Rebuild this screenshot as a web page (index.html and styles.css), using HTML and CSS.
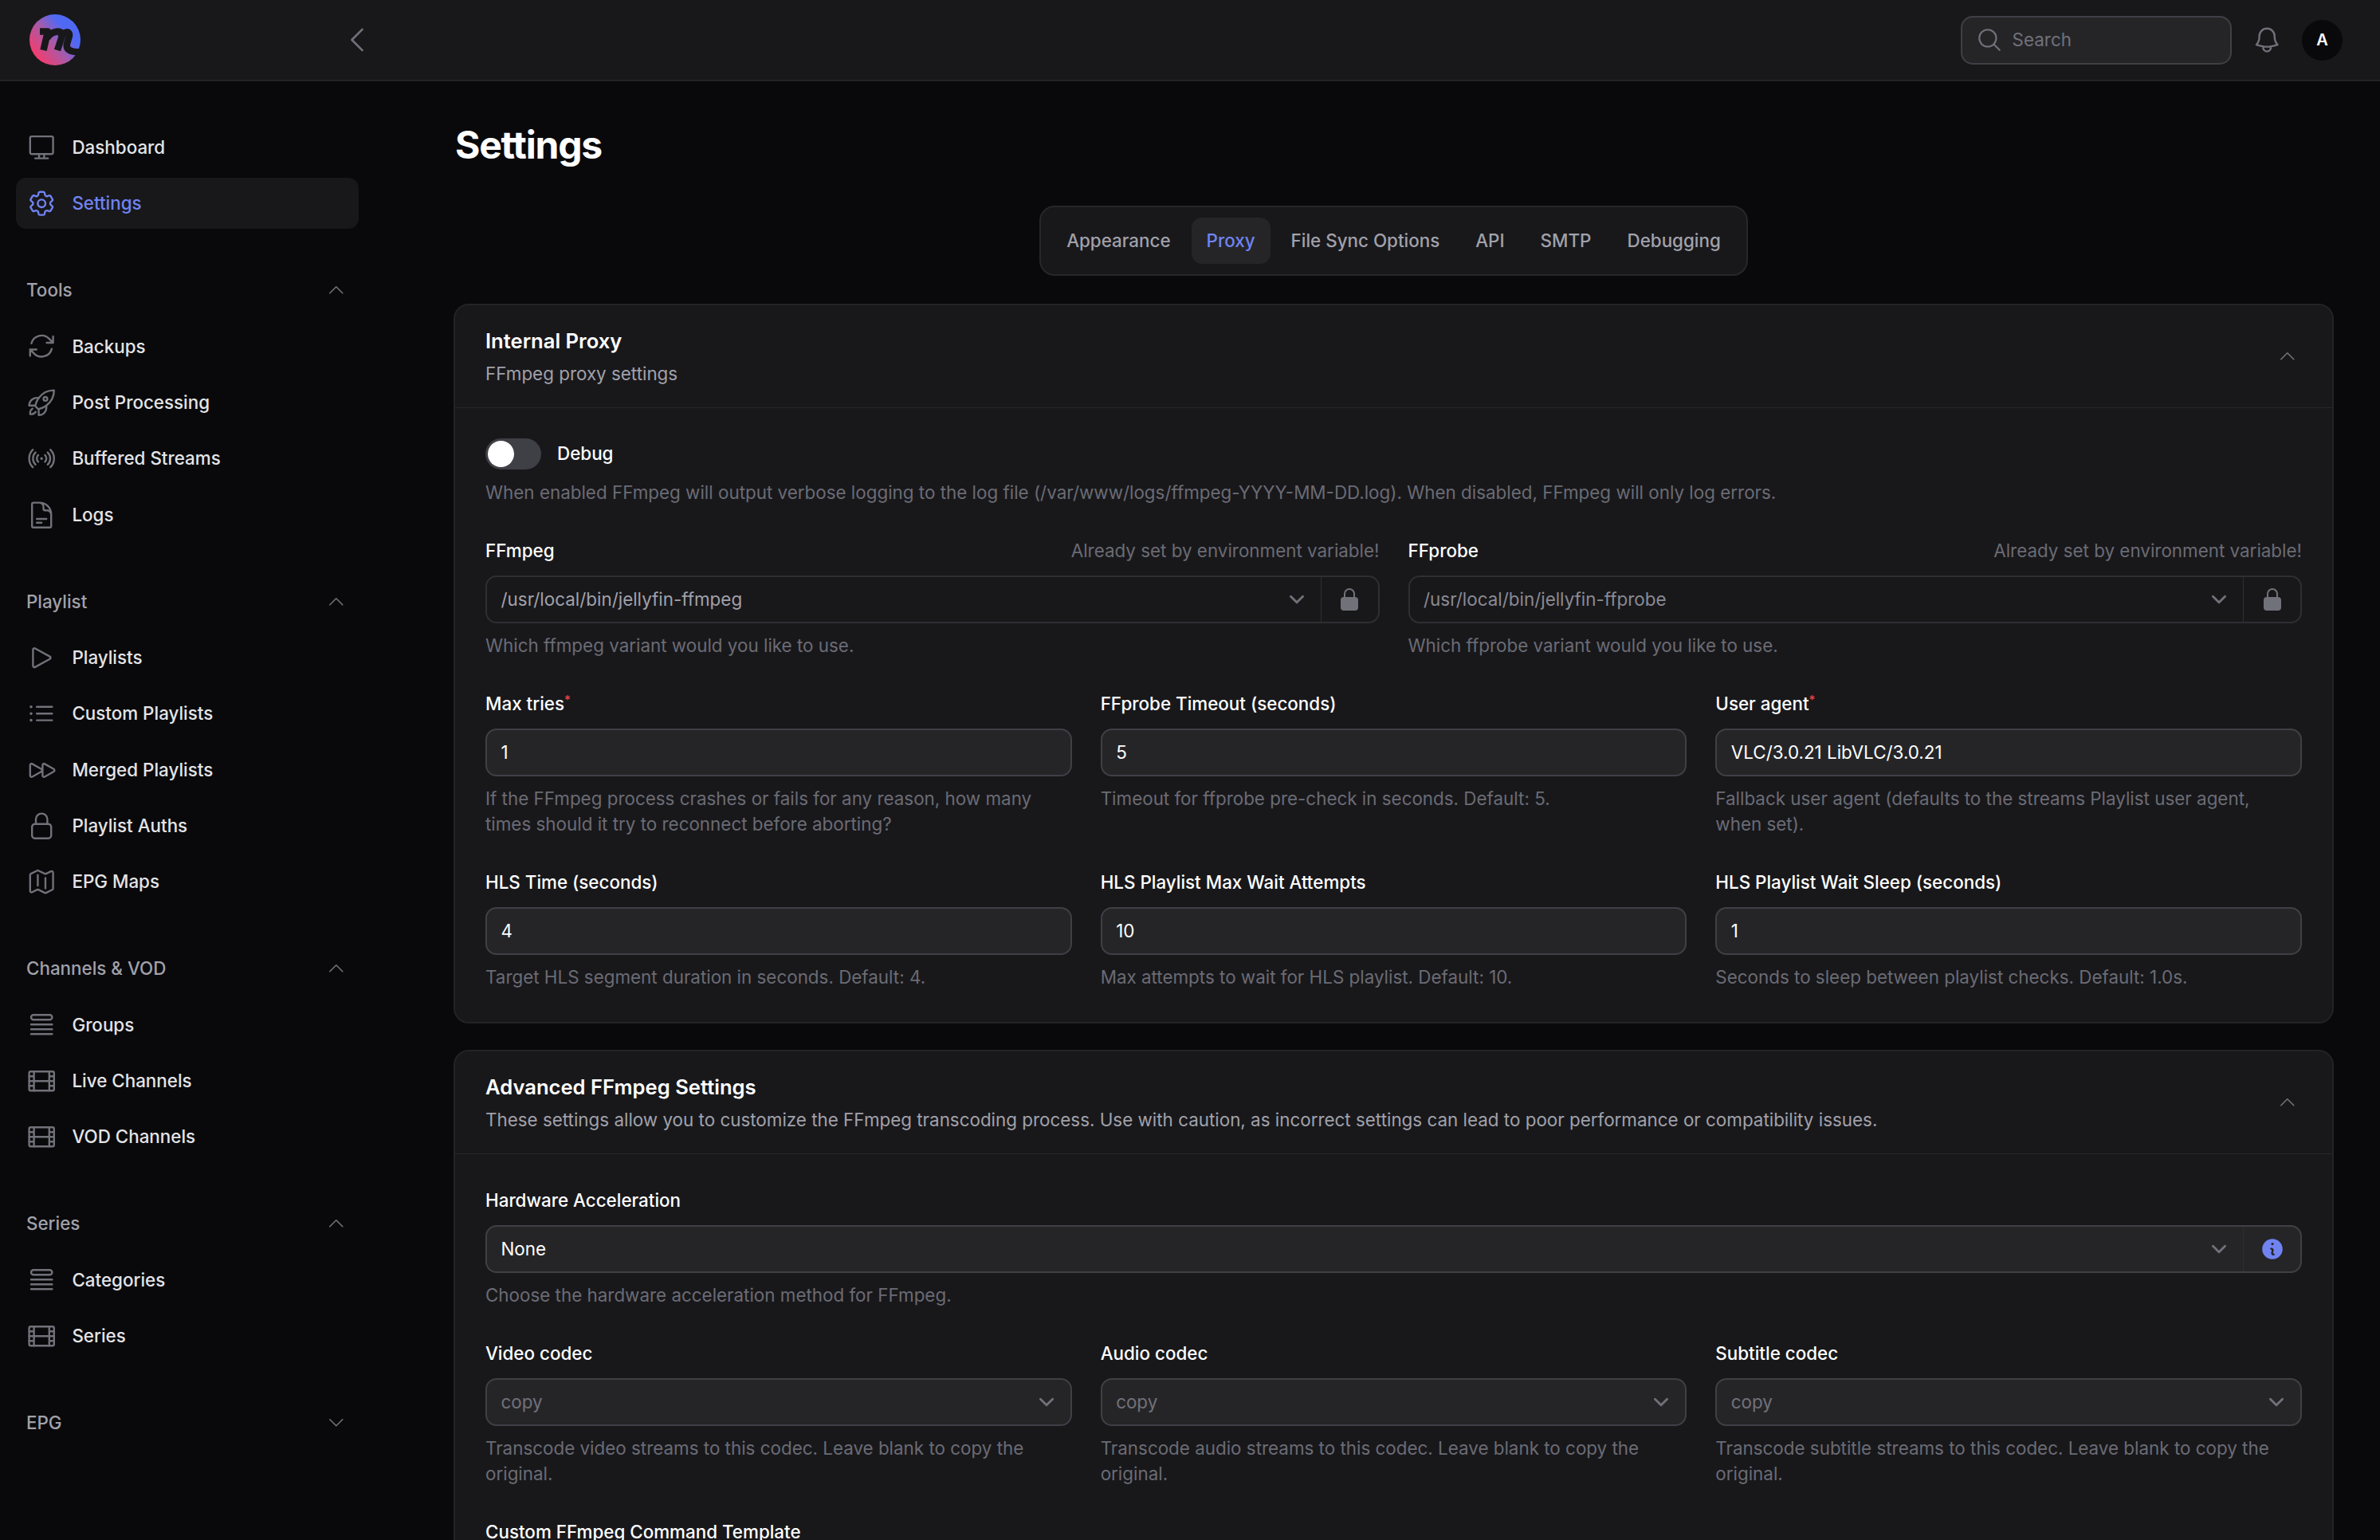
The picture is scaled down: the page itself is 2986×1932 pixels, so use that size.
FILE: index.html
```html
<!DOCTYPE html>
<html lang="en">
<head>
    <meta charset="UTF-8">
    <meta name="viewport" content="width=device-width, initial-scale=1.0">
    <title>Settings</title>
    <link rel="stylesheet" href="styles.css">
</head>
<body>
    <!-- Icon sprite -->
    <svg class="sprite" xmlns="http://www.w3.org/2000/svg">
        <symbol id="i-monitor" viewBox="0 0 24 24"><path d="M4.2 3.2h15.6c.7 0 1.2.5 1.2 1.2v11.4c0 .7-.5 1.2-1.2 1.2H4.2c-.7 0-1.2-.5-1.2-1.2V4.4c0-.7.5-1.2 1.2-1.2ZM10 17v3.2m4-3.2v3.2M7 20.4h10"/></symbol>
        <symbol id="i-cog" viewBox="0 0 24 24"><path d="M9.594 3.94c.09-.542.56-.94 1.11-.94h2.593c.55 0 1.02.398 1.11.94l.213 1.281c.063.374.313.686.645.87.074.04.147.083.22.127.325.196.72.257 1.075.124l1.217-.456a1.125 1.125 0 0 1 1.37.49l1.296 2.247a1.125 1.125 0 0 1-.26 1.431l-1.003.827c-.293.241-.438.613-.43.992a7.723 7.723 0 0 1 0 .255c-.008.378.137.75.43.991l1.004.827c.424.35.534.955.26 1.43l-1.298 2.247a1.125 1.125 0 0 1-1.369.491l-1.217-.456c-.355-.133-.75-.072-1.076.124a6.47 6.47 0 0 1-.22.128c-.331.183-.581.495-.644.869l-.213 1.281c-.09.543-.56.94-1.11.94h-2.594c-.55 0-1.019-.398-1.11-.94l-.213-1.281c-.062-.374-.312-.686-.644-.87a6.52 6.52 0 0 1-.22-.127c-.325-.196-.72-.257-1.076-.124l-1.217.456a1.125 1.125 0 0 1-1.369-.49l-1.297-2.247a1.125 1.125 0 0 1 .26-1.431l1.004-.827c.292-.24.437-.613.43-.991a6.932 6.932 0 0 1 0-.255c.007-.38-.138-.751-.43-.992l-1.004-.827a1.125 1.125 0 0 1-.26-1.43l1.297-2.247a1.125 1.125 0 0 1 1.37-.491l1.216.456c.356.133.751.072 1.076-.124.072-.044.146-.086.22-.128.332-.183.582-.495.644-.869l.214-1.28Z"/><path d="M15 12a3 3 0 1 1-6 0 3 3 0 0 1 6 0Z"/></symbol>
        <symbol id="i-sync" viewBox="0 0 24 24"><path d="M16.023 9.348h4.992v-.001M2.985 19.644v-4.992m0 0h4.992m-4.993 0 3.181 3.183a8.25 8.25 0 0 0 13.803-3.7M4.031 9.865a8.25 8.25 0 0 1 13.803-3.7l3.181 3.182m0-4.991v4.99"/></symbol>
        <symbol id="i-rocket" viewBox="0 0 24 24"><path d="M15.59 14.37a6 6 0 0 1-5.84 7.38v-4.8m5.84-2.58a14.98 14.98 0 0 0 6.16-12.12A14.98 14.98 0 0 0 9.631 8.41m5.96 5.96a14.926 14.926 0 0 1-5.841 2.58m-.119-8.54a6 6 0 0 0-7.381 5.84h4.8m2.581-5.84a14.927 14.927 0 0 0-2.58 5.84m2.699 2.7c-.103.021-.207.041-.311.06a15.09 15.09 0 0 1-2.448-2.448 14.9 14.9 0 0 1 .06-.312m-2.24 2.39a4.493 4.493 0 0 0-1.757 4.306 4.493 4.493 0 0 0 4.306-1.758M16.5 9a1.5 1.5 0 1 1-3 0 1.5 1.5 0 0 1 3 0Z"/></symbol>
        <symbol id="i-signal" viewBox="0 0 24 24"><path d="M9.348 14.652a3.75 3.75 0 0 1 0-5.304m5.304 0a3.75 3.75 0 0 1 0 5.304m-7.425 2.121a6.75 6.75 0 0 1 0-9.546m9.546 0a6.75 6.75 0 0 1 0 9.546M5.106 18.894c-3.808-3.807-3.808-9.98 0-13.788m13.788 0c3.808 3.807 3.808 9.98 0 13.788M12 12h.008v.008H12V12Zm.375 0a.375.375 0 1 1-.75 0 .375.375 0 0 1 .75 0Z"/></symbol>
        <symbol id="i-doc" viewBox="0 0 24 24"><path d="M19.5 14.25v-2.625a3.375 3.375 0 0 0-3.375-3.375h-1.5A1.125 1.125 0 0 1 13.5 7.125v-1.5a3.375 3.375 0 0 0-3.375-3.375H8.25m0 12.75h7.5m-7.5 3H12M10.5 2.25H5.625c-.621 0-1.125.504-1.125 1.125v17.25c0 .621.504 1.125 1.125 1.125h12.75c.621 0 1.125-.504 1.125-1.125V11.25a9 9 0 0 0-9-9Z"/></symbol>
        <symbol id="i-play" viewBox="0 0 24 24"><path d="M5.25 5.653c0-.856.917-1.398 1.667-.986l11.54 6.347a1.125 1.125 0 0 1 0 1.972l-11.54 6.347a1.125 1.125 0 0 1-1.667-.986V5.653Z"/></symbol>
        <symbol id="i-list" viewBox="0 0 24 24"><path d="M8.25 6.75h12M8.25 12h12m-12 5.25h12M3.75 6.75h.007v.008H3.75V6.75Zm.375 0a.375.375 0 1 1-.75 0 .375.375 0 0 1 .75 0ZM3.75 12h.007v.008H3.75V12Zm.375 0a.375.375 0 1 1-.75 0 .375.375 0 0 1 .75 0Zm-.375 5.25h.007v.008H3.75v-.008Zm.375 0a.375.375 0 1 1-.75 0 .375.375 0 0 1 .75 0Z"/></symbol>
        <symbol id="i-forward" viewBox="0 0 24 24"><path d="M3 8.689c0-.864.933-1.406 1.683-.977l7.108 4.061a1.125 1.125 0 0 1 0 1.954l-7.108 4.061A1.125 1.125 0 0 1 3 16.811V8.69ZM12.75 8.689c0-.864.933-1.406 1.683-.977l7.108 4.061a1.125 1.125 0 0 1 0 1.954l-7.108 4.061a1.125 1.125 0 0 1-1.683-.977V8.69Z"/></symbol>
        <symbol id="i-lock" viewBox="0 0 24 24"><path d="M16.5 10.5V6.75a4.5 4.5 0 1 0-9 0v3.75m-.75 11.25h10.5a2.25 2.25 0 0 0 2.25-2.25v-6.75a2.25 2.25 0 0 0-2.25-2.25H6.75a2.25 2.25 0 0 0-2.25 2.25v6.75a2.25 2.25 0 0 0 2.25 2.25Z"/></symbol>
        <symbol id="i-map" viewBox="0 0 24 24"><path d="M9 6.75V15m6-6v8.25m.503 3.498 4.875-2.437c.381-.19.622-.58.622-1.006V4.82c0-.836-.88-1.38-1.628-1.006l-3.869 1.934c-.317.159-.69.159-1.006 0L9.503 3.252a1.125 1.125 0 0 0-1.006 0L3.622 5.689C3.24 5.88 3 6.27 3 6.695V19.18c0 .836.88 1.38 1.628 1.006l3.869-1.934c.317-.159.69-.159 1.006 0l4.994 2.497c.317.158.69.158 1.006 0Z"/></symbol>
        <symbol id="i-queue" viewBox="0 0 24 24"><path d="M3.75 12h16.5m-16.5 3.75h16.5m-16.5 3.75h16.5M5.625 4.5h12.75a1.875 1.875 0 0 1 0 3.75H5.625a1.875 1.875 0 0 1 0-3.75Z"/></symbol>
        <symbol id="i-film" viewBox="0 0 24 24"><rect x="2.25" y="4.5" width="19.5" height="15" rx="1.125"/><path d="M6 4.5v15M18 4.5v15M6 12h12M2.25 8.25H6M2.25 12H6M2.25 15.75H6M18 8.25h3.75M18 12h3.75M18 15.75h3.75"/></symbol>
        <symbol id="i-up" viewBox="0 0 24 24"><path d="m4.5 15.75 7.5-7.5 7.5 7.5"/></symbol>
        <symbol id="i-down" viewBox="0 0 24 24"><path d="m19.5 8.25-7.5 7.5-7.5-7.5"/></symbol>
        <symbol id="i-caret" viewBox="0 0 20 20"><path d="m6 8 4 4 4-4"/></symbol>
    </svg>

    <!-- Top bar -->
    <header class="topbar">
        <svg class="logo" viewBox="0 0 64 64">
            <defs>
                <linearGradient id="logoFill" x1="0.05" y1="0.8" x2="0.8" y2="0.2">
                    <stop offset="0" stop-color="#fb3a68"/>
                    <stop offset="0.5" stop-color="#a85aa8"/>
                    <stop offset="0.85" stop-color="#5069f5"/>
                </linearGradient>
            </defs>
            <circle cx="32" cy="32" r="32" fill="url(#logoFill)"/>
            <path class="logo-mark" d="M13 21.500H23L17.500 45M22 30C27 21 42 18 41 27L35 45M39 29C43 21 51 20 50 27L47 37C45 46 55 48 66 47"/>
        </svg>
        <button class="collapse" type="button">
            <svg viewBox="0 0 24 24" class="ico"><path d="M15.750 19.500 8.250 12l7.500-7.500"/></svg>
        </button>
        <div class="topbar-right">
            <div class="search">
                <svg viewBox="0 0 24 24" class="ico search-ico"><path d="m21 21-5.197-5.197m0 0A7.500 7.500 0 1 0 5.196 5.196a7.500 7.500 0 0 0 10.607 10.607Z"/></svg>
                <span>Search</span>
            </div>
            <svg viewBox="0 0 24 24" class="ico bell"><path d="M14.857 17.082a23.848 23.848 0 0 0 5.454-1.310A8.967 8.967 0 0 1 18 9.750V9A6 6 0 0 0 6 9v.750a8.967 8.967 0 0 1-2.312 6.022c1.733.640 3.560 1.085 5.455 1.310m5.714 0a24.255 24.255 0 0 1-5.714 0m5.714 0a3 3 0 1 1-5.714 0"/></svg>
            <div class="avatar">A</div>
        </div>
    </header>

    <div class="shell">
        <!-- Sidebar -->
        <nav class="sidebar">
            <div class="nav-group">
                <a class="nav-item"><svg class="ico"><use href="#i-monitor"/></svg>Dashboard</a>
                <a class="nav-item active"><svg class="ico"><use href="#i-cog"/></svg>Settings</a>
            </div>
            <div class="nav-group">
                <div class="nav-label">Tools<svg class="ico"><use href="#i-up"/></svg></div>
                <a class="nav-item"><svg class="ico"><use href="#i-sync"/></svg>Backups</a>
                <a class="nav-item"><svg class="ico"><use href="#i-rocket"/></svg>Post Processing</a>
                <a class="nav-item"><svg class="ico"><use href="#i-signal"/></svg>Buffered Streams</a>
                <a class="nav-item"><svg class="ico"><use href="#i-doc"/></svg>Logs</a>
            </div>
            <div class="nav-group">
                <div class="nav-label">Playlist<svg class="ico"><use href="#i-up"/></svg></div>
                <a class="nav-item"><svg class="ico"><use href="#i-play"/></svg>Playlists</a>
                <a class="nav-item"><svg class="ico"><use href="#i-list"/></svg>Custom Playlists</a>
                <a class="nav-item"><svg class="ico"><use href="#i-forward"/></svg>Merged Playlists</a>
                <a class="nav-item"><svg class="ico"><use href="#i-lock"/></svg>Playlist Auths</a>
                <a class="nav-item"><svg class="ico"><use href="#i-map"/></svg>EPG Maps</a>
            </div>
            <div class="nav-group">
                <div class="nav-label">Channels &amp; VOD<svg class="ico"><use href="#i-up"/></svg></div>
                <a class="nav-item"><svg class="ico"><use href="#i-queue"/></svg>Groups</a>
                <a class="nav-item"><svg class="ico"><use href="#i-film"/></svg>Live Channels</a>
                <a class="nav-item"><svg class="ico"><use href="#i-film"/></svg>VOD Channels</a>
            </div>
            <div class="nav-group">
                <div class="nav-label">Series<svg class="ico"><use href="#i-up"/></svg></div>
                <a class="nav-item"><svg class="ico"><use href="#i-queue"/></svg>Categories</a>
                <a class="nav-item"><svg class="ico"><use href="#i-film"/></svg>Series</a>
            </div>
            <div class="nav-group">
                <div class="nav-label">EPG<svg class="ico"><use href="#i-down"/></svg></div>
            </div>
        </nav>

        <!-- Main content -->
        <main class="content">
            <h1>Settings</h1>

            <div class="tabs-wrap">
                <div class="tabs">
                    <span class="tab">Appearance</span>
                    <span class="tab active">Proxy</span>
                    <span class="tab">File Sync Options</span>
                    <span class="tab">API</span>
                    <span class="tab">SMTP</span>
                    <span class="tab">Debugging</span>
                </div>
            </div>

            <!-- Internal Proxy -->
            <section class="card">
                <div class="card-head">
                    <div>
                        <h2>Internal Proxy</h2>
                        <p>FFmpeg proxy settings</p>
                    </div>
                    <svg class="ico card-toggle"><use href="#i-up"/></svg>
                </div>
                <div class="card-body">
                    <div class="field">
                        <div class="switch-row">
                            <span class="switch"><span class="knob"></span></span>
                            <span class="label">Debug</span>
                        </div>
                        <p class="help help-tight">When enabled FFmpeg will output verbose logging to the log file (/var/www/logs/ffmpeg-YYYY-MM-DD.log). When disabled, FFmpeg will only log errors.</p>
                    </div>

                    <div class="row row-2">
                        <div class="field">
                            <div class="label-row"><span class="label">FFmpeg</span><span class="hint">Already set by environment variable!</span></div>
                            <div class="control disabled">
                                <span class="value soft">/usr/local/bin/jellyfin-ffmpeg</span>
                                <svg class="caret"><use href="#i-caret"/></svg>
                                <span class="addon"><svg viewBox="0 0 24 24" class="lock"><path fill-rule="evenodd" d="M12 1.500a5.250 5.250 0 0 0-5.250 5.250v3a3 3 0 0 0-3 3v6.750a3 3 0 0 0 3 3h10.500a3 3 0 0 0 3-3v-6.750a3 3 0 0 0-3-3v-3c0-2.900-2.350-5.250-5.250-5.250Zm3.750 8.250v-3a3.750 3.750 0 1 0-7.500 0v3h7.500Z"/></svg></span>
                            </div>
                            <p class="help">Which ffmpeg variant would you like to use.</p>
                        </div>
                        <div class="field">
                            <div class="label-row"><span class="label">FFprobe</span><span class="hint">Already set by environment variable!</span></div>
                            <div class="control disabled">
                                <span class="value muted">/usr/local/bin/jellyfin-ffprobe</span>
                                <svg class="caret"><use href="#i-caret"/></svg>
                                <span class="addon"><svg viewBox="0 0 24 24" class="lock"><path fill-rule="evenodd" d="M12 1.500a5.250 5.250 0 0 0-5.250 5.250v3a3 3 0 0 0-3 3v6.750a3 3 0 0 0 3 3h10.500a3 3 0 0 0 3-3v-6.750a3 3 0 0 0-3-3v-3c0-2.900-2.350-5.250-5.250-5.250Zm3.750 8.250v-3a3.750 3.750 0 1 0-7.500 0v3h7.500Z"/></svg></span>
                            </div>
                            <p class="help">Which ffprobe variant would you like to use.</p>
                        </div>
                    </div>

                    <div class="row row-3">
                        <div class="field">
                            <div class="label-row"><span class="label">Max tries<sup class="req">*</sup></span></div>
                            <div class="control"><span class="value">1</span></div>
                            <p class="help">If the FFmpeg process crashes or fails for any reason, how many times should it try to reconnect before aborting?</p>
                        </div>
                        <div class="field">
                            <div class="label-row"><span class="label">FFprobe Timeout (seconds)</span></div>
                            <div class="control"><span class="value">5</span></div>
                            <p class="help">Timeout for ffprobe pre-check in seconds. Default: 5.</p>
                        </div>
                        <div class="field">
                            <div class="label-row"><span class="label">User agent<sup class="req">*</sup></span></div>
                            <div class="control"><span class="value">VLC/3.0.21 LibVLC/3.0.21</span></div>
                            <p class="help">Fallback user agent (defaults to the streams Playlist user agent, when set).</p>
                        </div>
                    </div>

                    <div class="row row-3">
                        <div class="field">
                            <div class="label-row"><span class="label">HLS Time (seconds)</span></div>
                            <div class="control"><span class="value">4</span></div>
                            <p class="help">Target HLS segment duration in seconds. Default: 4.</p>
                        </div>
                        <div class="field">
                            <div class="label-row"><span class="label">HLS Playlist Max Wait Attempts</span></div>
                            <div class="control"><span class="value">10</span></div>
                            <p class="help">Max attempts to wait for HLS playlist. Default: 10.</p>
                        </div>
                        <div class="field">
                            <div class="label-row"><span class="label">HLS Playlist Wait Sleep (seconds)</span></div>
                            <div class="control"><span class="value">1</span></div>
                            <p class="help">Seconds to sleep between playlist checks. Default: 1.0s.</p>
                        </div>
                    </div>
                </div>
            </section>

            <!-- Advanced FFmpeg Settings -->
            <section class="card">
                <div class="card-head">
                    <div>
                        <h2>Advanced FFmpeg Settings</h2>
                        <p>These settings allow you to customize the FFmpeg transcoding process. Use with caution, as incorrect settings can lead to poor performance or compatibility issues.</p>
                    </div>
                    <svg class="ico card-toggle"><use href="#i-up"/></svg>
                </div>
                <div class="card-body roomy">
                    <div class="field">
                        <div class="label-row"><span class="label">Hardware Acceleration</span></div>
                        <div class="control">
                            <span class="value">None</span>
                            <svg class="caret"><use href="#i-caret"/></svg>
                            <span class="addon"><svg viewBox="0 0 20 20" class="info"><path fill-rule="evenodd" d="M18 10a8 8 0 1 1-16 0 8 8 0 0 1 16 0Zm-7-4a1 1 0 1 1-2 0 1 1 0 0 1 2 0ZM9 9a.750.750 0 0 0 0 1.500h.253a.250.250 0 0 1 .244.304l-.459 2.066A1.750 1.750 0 0 0 10.747 15H11a.750.750 0 0 0 0-1.500h-.253a.250.250 0 0 1-.244-.304l.459-2.066A1.750 1.750 0 0 0 9.253 9H9Z"/></svg></span>
                        </div>
                        <p class="help">Choose the hardware acceleration method for FFmpeg.</p>
                    </div>

                    <div class="row row-3">
                        <div class="field">
                            <div class="label-row"><span class="label">Video codec</span></div>
                            <div class="control"><span class="value dim">copy</span><svg class="caret"><use href="#i-caret"/></svg></div>
                            <p class="help">Transcode video streams to this codec. Leave blank to copy the original.</p>
                        </div>
                        <div class="field">
                            <div class="label-row"><span class="label">Audio codec</span></div>
                            <div class="control"><span class="value dim">copy</span><svg class="caret"><use href="#i-caret"/></svg></div>
                            <p class="help">Transcode audio streams to this codec. Leave blank to copy the original.</p>
                        </div>
                        <div class="field">
                            <div class="label-row"><span class="label">Subtitle codec</span></div>
                            <div class="control"><span class="value dim">copy</span><svg class="caret"><use href="#i-caret"/></svg></div>
                            <p class="help">Transcode subtitle streams to this codec. Leave blank to copy the original.</p>
                        </div>
                    </div>

                    <div class="row">
                        <div class="field">
                            <div class="label-row"><span class="label label-last">Custom FFmpeg Command Template</span></div>
                        </div>
                    </div>
                </div>
            </section>
        </main>
    </div>
</body>
</html>
```

FILE: styles.css
```css
/* Global Styles */
* {
    box-sizing: border-box;
}

html,
body {
    height: 100%;
}

body {
    margin: 0;
    display: flex;
    flex-direction: column;
    overflow: hidden;
    background: #09090b;
    color: #fff;
    font-family: 'Inter', 'Liberation Sans', sans-serif;
    font-size: 22.4px;
    line-height: 32px;
}

h1,
h2,
p {
    margin: 0;
}

.sprite {
    display: none;
}

.ico {
    width: 38.4px;
    height: 38.4px;
    flex-shrink: 0;
    fill: none;
    stroke: #71717a;
    stroke-width: 1.5;
    stroke-linecap: round;
    stroke-linejoin: round;
}

/* Top bar */
.topbar {
    display: flex;
    align-items: center;
    flex-shrink: 0;
    height: 102px;
    padding: 0 47px 0 37px;
    background: #18181b;
    border-bottom: 2px solid #232326;
}

.logo {
    width: 64px;
    height: 64px;
    flex-shrink: 0;
}

.logo-mark {
    fill: none;
    stroke: #18181b;
    stroke-width: 8.5;
    stroke-linejoin: round;
}

.collapse {
    display: flex;
    margin-left: 326px;
    padding: 0;
    border: 0;
    background: none;
}

.collapse .ico {
    width: 42px;
    height: 42px;
}

.topbar-right {
    display: flex;
    align-items: center;
    margin-left: auto;
}

.search {
    display: flex;
    align-items: center;
    gap: 12px;
    width: 340px;
    height: 61px;
    padding: 0 17px;
    background: #252528;
    border: 2px solid #3f3f46;
    border-radius: 15px;
    color: #71717a;
}

.search-ico {
    width: 34px;
    height: 34px;
}

.bell {
    margin-left: 25px;
}

.avatar {
    display: flex;
    align-items: center;
    justify-content: center;
    width: 51px;
    height: 51px;
    margin-left: 25px;
    background: #09090b;
    border-radius: 50%;
    font-size: 20px;
    font-weight: 600;
}

/* Sidebar */
.shell {
    display: flex;
    flex: 1;
    min-height: 0;
}

.sidebar {
    display: flex;
    flex-direction: column;
    gap: 51.2px;
    flex-shrink: 0;
    width: 474px;
    padding: 51px 24px 0 20px;
}

.nav-group {
    display: flex;
    flex-direction: column;
    gap: 6.4px;
}

.nav-item {
    display: flex;
    align-items: center;
    gap: 19px;
    height: 64px;
    padding: 0 13px;
    border-radius: 13px;
    color: #e4e4e7;
    font-weight: 500;
}

.nav-item.active {
    background: #18181b;
    color: #7083f1;
}

.nav-item.active .ico {
    stroke: #7083f1;
}

.nav-label {
    display: flex;
    align-items: center;
    justify-content: space-between;
    height: 51.2px;
    margin-bottom: 6.4px;
    padding: 0 15px 0 13px;
    color: #a1a1aa;
    font-weight: 500;
}

.nav-label .ico {
    width: 25.6px;
    height: 25.6px;
}

/* Main content */
.content {
    flex: 1;
    min-width: 0;
    padding: 51px 58px 0 95px;
}

h1 {
    margin-left: 2px;
    font-size: 48px;
    line-height: 57.6px;
    font-weight: 700;
    letter-spacing: -0.025em;
}

.tabs-wrap {
    display: flex;
    justify-content: center;
    margin: 47px 0 35px;
}

.tabs {
    display: flex;
    gap: 7px;
    padding: 13px;
    background: #18181b;
    border: 2px solid #27272a;
    border-radius: 19px;
}

.tab {
    display: flex;
    align-items: center;
    height: 58px;
    padding: 0 19px;
    border-radius: 13px;
    color: #a1a1aa;
    font-weight: 500;
}

.tab.active {
    background: #252528;
    color: #7083f1;
}

/* Cards */
.card {
    margin-bottom: 33px;
    background: #18181b;
    border: 2px solid #232326;
    border-radius: 19px;
}

.card-head {
    display: flex;
    align-items: center;
    justify-content: space-between;
    height: 129px;
    padding: 1px 38px 0;
    border-bottom: 1.5px solid #27272a;
}

.card-head h2 {
    margin-bottom: 6px;
    font-size: 25.6px;
    line-height: 38.4px;
    font-weight: 600;
}

.card-head p {
    color: #a1a1aa;
}

.card-toggle {
    width: 25.6px;
    height: 25.6px;
    margin-right: 5px;
}

.card-body {
    display: flex;
    flex-direction: column;
    gap: 41px;
    padding: 38px 38px 40px;
}

.card-body.roomy {
    padding-top: 42px;
}

.row {
    display: grid;
    gap: 36px;
}

.row-2 {
    grid-template-columns: repeat(2, 1fr);
}

.row-3 {
    grid-template-columns: repeat(3, 1fr);
}

/* Form fields */
.label-row {
    display: flex;
    justify-content: space-between;
    margin-bottom: 15px;
}

.label {
    font-weight: 500;
}

.label-last {
    padding-top: 4px;
    line-height: 24px;
}

.hint {
    color: #6b6b74;
}

.req {
    color: #ef4444;
    font-size: 15px;
    line-height: 0;
    vertical-align: super;
}

.help {
    margin-top: 12px;
    padding-right: 6px;
    color: #6b6b74;
}

.help-tight {
    margin-top: 13px;
}

.switch-row {
    display: flex;
    align-items: center;
    gap: 20px;
}

.switch {
    display: flex;
    align-items: center;
    width: 70px;
    height: 39px;
    padding: 0 3px;
    background: #3f3f46;
    border-radius: 20px;
}

.knob {
    width: 33px;
    height: 33px;
    background: #fff;
    border-radius: 50%;
}

.control {
    display: flex;
    align-items: center;
    height: 60px;
    padding-left: 17.5px;
    background: #252528;
    border: 2px solid #3f3f46;
    border-radius: 14px;
}

.control.disabled {
    background: transparent;
    border-color: #2e2e33;
}

.value {
    flex: 1;
}

.value.soft {
    color: #a1a1aa;
}

.value.muted {
    color: #8a8a93;
}

.value.dim {
    color: #71717a;
}

.caret {
    width: 38px;
    height: 38px;
    margin-right: 11px;
    fill: none;
    stroke: #71717a;
    stroke-width: 1.5;
    stroke-linecap: round;
    stroke-linejoin: round;
}

.addon {
    display: flex;
    align-items: center;
    justify-content: center;
    align-self: stretch;
    width: 72px;
    border-left: 1.5px solid #2e2e33;
}

.lock {
    width: 32px;
    height: 32px;
    fill: #71717a;
}

.info {
    width: 32px;
    height: 32px;
    fill: #7083f1;
}
```
